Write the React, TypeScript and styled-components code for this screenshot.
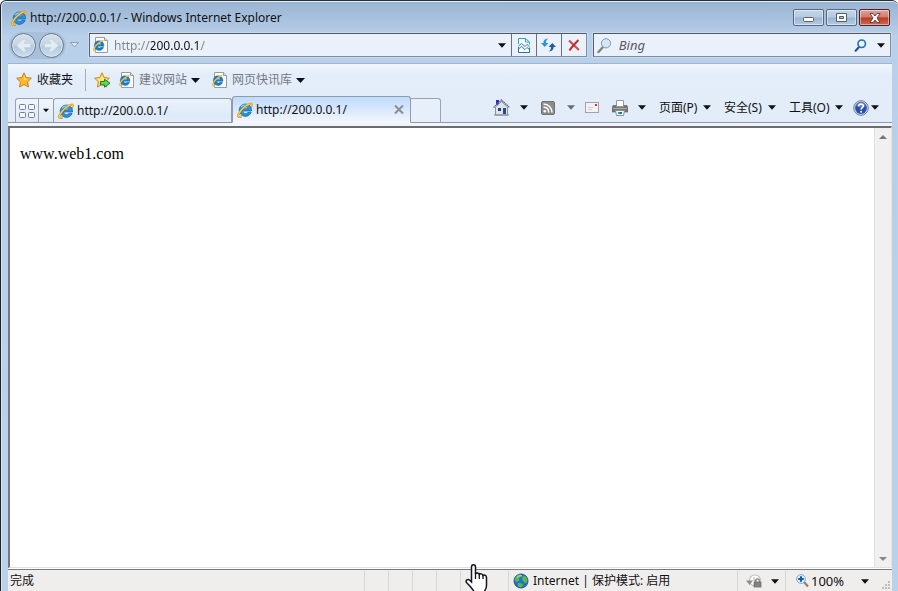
import React from "react";
import styled, { createGlobalStyle, css } from "styled-components";

const GlobalStyle = createGlobalStyle`
  * { box-sizing: border-box; }
  html, body { margin: 0; padding: 0; overflow: hidden; }
  body, button, input {
    font-family: "Noto Sans", "Noto Sans CJK SC", sans-serif;
    font-size: 12px;
    line-height: 16px;
    color: #111;
  }
  button { background: none; border: 0; padding: 0; margin: 0; cursor: pointer; }
  svg { display: block; flex: none; }
`;

const Frame = styled.div`
  height: 100vh;
  display: flex;
  flex-direction: column;
  background: linear-gradient(#98b3d1 0, #a8c1de 18px, #b9d0ea 36px, #b9d1ea 100%);
  border-top: 1px solid #223039;
  border-left: 1px solid #1c1f24;
  border-top-left-radius: 6px;
  border-top-right-radius: 6px;
  box-shadow: inset 0 1px 0 #e3edf6, inset 1px 0 0 #dbe8f5;
  padding: 0 6px 0 7px;
`;

const TitleBar = styled.header`
  display: flex;
  align-items: center;
  height: 32px;
  gap: 3px;
  padding: 1px 2px 0 3px;
`;

const Title = styled.h1`
  flex: 1;
  margin: 0;
  font-size: 12px;
  font-weight: 400;
`;

const WindowButtons = styled.div`
  display: flex;
  gap: 2px;
`;

const WindowButton = styled.button<{ $close?: boolean }>`
  width: 31px;
  height: 17px;
  display: grid;
  place-items: center;
  border: 1px solid ${(p) => (p.$close ? "#4e2226" : "#56697f")};
  border-radius: 2px;
  box-shadow: inset 0 0 0 1px rgba(255, 255, 255, 0.45);
  background: ${(p) =>
    p.$close
      ? "linear-gradient(#e3a49a 0, #d3796a 7px, #b93b22 8px, #cf6c54 100%)"
      : "linear-gradient(#c4d5e8 0, #b5cae2 7px, #9bb4d0 8px, #b3cbe5 100%)"};
`;

const NavRow = styled.div`
  display: flex;
  height: 30px;
  align-items: flex-start;
  padding-right: 1px;
`;

const NavButtons = styled.div`
  display: flex;
  align-items: center;
  width: 81px;
  height: 24px;
  padding-left: 1px;
`;

const NavPair = styled.div`
  display: flex;
  gap: 3px;
  padding: 1px 2px;
  border-radius: 14px;
  background: #a9c0da;
`;

const RoundButton = styled.button`
  width: 25px;
  height: 25px;
  display: grid;
  place-items: center;
  border: 1px solid #66798f;
  border-radius: 50%;
  background: linear-gradient(#d5e0eb 0, #c6d4e2 48%, #b2c7da 52%, #cbdfef 100%);
  box-shadow: inset 0 0 0 1px #dce6ef;
`;

const SmallDrop = styled.button`
  width: 17px;
  height: 20px;
  display: grid;
  place-items: center;
`;

const Field = styled.div`
  display: flex;
  align-items: center;
  height: 24px;
  background: #ebf1fa;
  border: 1px solid #7f8da0;
  border-top-color: #515861;
  border-left-color: #5b6470;
  box-shadow: 0 0 0 1px #c9daee;
`;

const AddressField = styled(Field)`
  flex: 499;
  min-width: 0;
  padding-left: 3px;
`;

const SearchField = styled(Field)`
  flex: 297;
  min-width: 0;
  margin-left: 6px;
  padding-left: 3px;
`;

const textInput = css`
  flex: 1;
  min-width: 0;
  height: 20px;
  border: 0;
  padding: 0;
  outline: 0;
`;

const AddressInput = styled.input`
  ${textInput}
  margin-left: 5px;
  color: transparent;
  caret-color: #111;
  background: linear-gradient(to right, #808489 0 37px, #111 37px 87px, #808489 87px);
  background-clip: text;
  -webkit-background-clip: text;
`;

const SearchInput = styled.input`
  ${textInput}
  margin-left: 7px;
  font-size: 13px;
  background: transparent;
  &::placeholder { color: #565a60; font-style: italic; opacity: 1; }
`;

const FieldButton = styled.button<{ $divided?: boolean; $width?: number }>`
  width: ${(p) => p.$width ?? 25}px;
  height: 22px;
  display: grid;
  place-items: center;
  border-left: ${(p) => (p.$divided ? "1px solid #69707b" : "0")};
`;

const Toolbars = styled.div`
  background: linear-gradient(#f0f6fd 0, #e4eefa 10px, #e1ecf8 100%);
  border-top: 1px solid #9fb5cf;
`;

const FavoritesBar = styled.nav`
  display: flex;
  align-items: center;
  height: 32px;
  padding: 0 8px;
`;

const FavoritesButton = styled.button`
  display: flex;
  align-items: center;
  gap: 4px;
  height: 22px;
  padding-right: 12px;
  border-right: 1px solid #a4adb8;
  margin-right: 8px;
`;

const FavLink = styled.button`
  display: flex;
  align-items: center;
  gap: 4px;
  color: #75797f;
  margin-left: 8px;
  padding-right: 4px;
`;

const TabRow = styled.div`
  display: flex;
  align-items: flex-end;
  height: 27px;
  padding-left: 7px;
  background: linear-gradient(transparent 26px, #8f99aa 26px);
`;

const QuickTabs = styled.div`
  display: flex;
  height: 25px;
  width: 38px;
  border: 1px solid #9aa3af;
  border-bottom-color: #8f99aa;
  border-right: 0;
  border-top-left-radius: 3px;
  background: linear-gradient(#f1f6fc, #dfe9f6);
`;

const QuickButton = styled.button<{ $narrow?: boolean }>`
  width: ${(p) => (p.$narrow ? 15 : 22)}px;
  display: grid;
  place-items: center;
  border-left: ${(p) => (p.$narrow ? "1px solid #9aa3af" : "0")};
`;

const Tab = styled.div<{ $active?: boolean }>`
  flex: 0 1 179px;
  min-width: 60px;
  height: ${(p) => (p.$active ? 27 : 25)}px;
  display: flex;
  align-items: center;
  padding: 0 6px 0 4px;
  border: 1px solid #929ba8;
  border-bottom-color: ${(p) => (p.$active ? "#f3f6fb" : "#8f99aa")};
  border-radius: 3px 3px 0 0;
  background: ${(p) =>
    p.$active
      ? "linear-gradient(#bfdbfc 0, #d8e7fb 12px, #f3f6fb 100%)"
      : "linear-gradient(#e9f1fb 0, #deeaf8 18px, #e6eefa 100%)"};
`;

const TabLabel = styled.button`
  flex: 1;
  display: flex;
  align-items: center;
  gap: 3px;
  white-space: nowrap;
`;

const NewTab = styled.button`
  width: 30px;
  height: 25px;
  border: 1px solid #9aa3af;
  border-bottom-color: #8f99aa;
  border-left: 0;
  border-radius: 0 3px 0 0;
  background: #e7effa;
`;

const ToolbarFoot = styled.div`
  height: 3px;
  background: #f1f5fb;
`;

const Commands = styled.div`
  display: flex;
  align-items: center;
  align-self: flex-start;
  margin-left: auto;
  height: 23px;
  padding-right: 13px;
`;

const Command = styled.button<{ $gap?: number; $before?: number; $label?: number }>`
  display: flex;
  align-items: center;
  gap: ${(p) => p.$gap ?? 4}px;
  margin-left: ${(p) => p.$before ?? 13}px;
  white-space: nowrap;
  span { min-width: ${(p) => p.$label ?? 0}px; text-align: left; }
`;

const Viewport = styled.main`
  flex: 1;
  min-height: 0;
  display: flex;
  background: #fff;
  border-top: 2px solid #696c70;
  border-left: 2px solid #75777b;
  border-right: 1px solid #e3e3e3;
  border-bottom: 1px solid #e0e0e0;
`;

const Page = styled.article`
  flex: 1;
  padding: 16px 10px;
  font: 16px/19px "Liberation Serif", serif;
  color: #000;
  p { margin: 0; }
`;

const Scrollbar = styled.div`
  width: 17px;
  display: flex;
  flex-direction: column;
  justify-content: space-between;
  background: #f0f0f0;
  border-left: 1px solid #e2e2e2;
`;

const ScrollButton = styled.button`
  height: 17px;
  display: grid;
  place-items: center;
`;

const StatusBar = styled.footer`
  position: relative;
  display: flex;
  height: 23px;
  background: #f0eded;
  border-top: 1px solid #fff;
  box-shadow: inset 0 1px 0 #77797c;
  padding-top: 2px;
`;

const Cell = styled.div<{ $width?: number; $first?: boolean }>`
  ${(p) => (p.$width ? `flex: none; width: ${p.$width}px;` : "flex: 1;")}
  display: flex;
  align-items: center;
  border-left: ${(p) => (p.$first ? "0" : "1px solid #d6d4d4")};
  padding-left: ${(p) => (p.$first ? 2 : 4)}px;
  white-space: nowrap;
`;

const StatusButton = styled.button<{ $gap: number; $pad: number }>`
  display: flex;
  align-items: center;
  gap: ${(p) => p.$gap}px;
  padding-left: ${(p) => p.$pad}px;
`;

const Zone = styled.span`
  margin-left: 4px;
`;

const ZoomText = styled.span`
  font-size: 13px;
  min-width: 48px;
  text-align: left;
`;

const Grip = styled.span`
  margin-left: auto;
  align-self: flex-end;
`;

const HandCursor = styled.svg`
  position: absolute;
  left: 457px;
  bottom: -1px;
`;

const Arrow = ({ color = "#111", size = 9 }: { color?: string; size?: number }) => (
  <svg width={size} height="5" viewBox="0 0 9 5" aria-hidden="true">
    <path d="M0 0h9L4.500 5z" fill={color} />
  </svg>
);

const IeLogo = () => (
  <svg width="16" height="16" viewBox="0 0 16 16" aria-hidden="true">
    <path d="M12.600 2.200C14 .9 15.500 1 15.200 3c-.1.8-.5 1.700-1 2.500" fill="none" stroke="#eeb027" strokeWidth="1.500" />
    <path
      d="M8.300 2a6.200 6.200 0 1 0 5.900 8.300h-3.300c-1.300 2.200-5 1.500-5.200-1.300h8.800C15 5 12.300 2 8.300 2zM5.800 6.800c.6-2.600 4.800-2.600 5.200 0z"
      fill="#2494dd"
      stroke="#1262ad"
      strokeWidth=".7"
    />
    <path d="M4 5.200c1.400-2 5-3 7.400-1.200" fill="none" stroke="#7dd3fa" strokeWidth="1.200" />
    <path d="M13.500 1.700C9.500 2.400 3.600 7.500 1.500 12.500c-1 2.600.6 3.200 3 1.800" fill="none" stroke="#b9780d" strokeWidth="2" />
    <path d="M13.500 1.700C9.500 2.400 3.600 7.500 1.500 12.500c-1 2.600.6 3.200 3 1.800" fill="none" stroke="#ffd04b" strokeWidth="1.200" />
  </svg>
);

const PageIcon = () => (
  <svg width="16" height="17" viewBox="0 0 16 17" aria-hidden="true">
    <path d="M2.500.5h9l3 3v12h-12z" fill="#fcfcfc" stroke="#9b9b9b" />
    <path d="M11.500.5v3h3" fill="#e0e0e0" stroke="#9b9b9b" />
    <path
      d="M6 3.800a4.800 4.800 0 1 0 4.600 6.500H7.900c-1 1.400-3 .9-3.200-1h6.200C11.200 6 9.200 3.800 6 3.800zM4.700 7.400c.4-1.900 3.100-1.900 3.500 0z"
      fill="#167dcc"
      stroke="#0f5ca8"
      strokeWidth=".4"
    />
    <path d="M10.500 3.500C7.500 4 2.400 8 1 11.500c-.8 2.200.4 2.700 2.200 1.800" fill="none" stroke="#f6b82e" strokeWidth="1.300" />
  </svg>
);

const starPath = "M8 .8l2.200 4.700 5.200.7-3.800 3.600.9 5.200L8 12.500 3.500 15l.9-5.200L.6 6.200l5.200-.7z";

const Star = ({ add }: { add?: boolean }) => (
  <svg width="17" height="17" viewBox="0 0 17 17" aria-hidden="true">
    <path d={starPath} fill={add ? "#ffe06b" : "#fdb82c"} stroke="#cf8018" strokeLinejoin="round" />
    <path d="M8 3l1.300 3.500 3.200.4-4.500 1z" fill="#fff0a8" opacity=".7" />
    {add && <path d="M6.500 9.500h4V7.200l5.500 4-5.500 4v-2.400h-4z" fill="#69d45c" stroke="#158520" />}
  </svg>
);

const NavArrow = ({ flip }: { flip?: boolean }) => (
  <svg width="17" height="15" viewBox="0 0 17 15" aria-hidden="true">
    <path
      d={flip ? "M1.500 5.500H8l-2.500-4h3.500l6.500 6-6.500 6H5.500l2.500-4H1.500z" : "M15.500 5.500H9l2.500-4H8l-6.500 6 6.500 6h3.500L9 9.500h6.500z"}
      fill="#e3ebf3"
      stroke="#c3d1de"
      strokeWidth=".6"
    />
  </svg>
);

const BrokenPage = () => (
  <svg width="12" height="15" viewBox="0 0 12 15" aria-hidden="true">
    <path d="M.5 6V.5h7l4 3.500v2.500" fill="#f8fcff" stroke="#2fa3c9" />
    <path d="M.5 9v5.500h11V9.500" fill="#f8fcff" stroke="#2873b5" />
    <path d="M7.500.5V4h4" fill="none" stroke="#2fa3c9" />
    <path d="M.5 8l3-2.500L7 8.500l2-2 2.500 2M.5 11l3-2.500L7 11.500l2-2 2.500 2" fill="none" stroke="#3a84bd" />
  </svg>
);

const Refresh = () => (
  <svg width="15" height="14" viewBox="0 0 15 14" aria-hidden="true">
    <path d="M7 .5C3.500.8 2.500 2.500 2.500 5H0l3.700 4L7.500 5H5C5 3 5.500 1.800 7 .5z" fill="#2f92d5" />
    <path d="M8 13.500c3.500-.3 4.500-2 4.500-4.500H15l-3.700-4L7.500 9H10c0 2-.5 3.200-2 4.500z" fill="#2358a7" />
  </svg>
);

const StopX = () => (
  <svg width="12" height="12" viewBox="0 0 12 12" aria-hidden="true">
    <path d="M1 1.500C4 4.500 7 7.500 11 11" fill="none" stroke="#d04c50" strokeWidth="2.200" />
    <path d="M10.500 1C7 4.500 4 7.500 1.500 11.500" fill="none" stroke="#c02a2c" strokeWidth="2" />
  </svg>
);

const Magnifier = ({ blue }: { blue?: boolean }) => (
  <svg width={blue ? 13 : 15} height={blue ? 13 : 17} viewBox="0 0 15 16" aria-hidden="true">
    <path d="M6 9.500L1.500 14.500" stroke={blue ? "#24509a" : "#858585"} strokeWidth="2.500" strokeLinecap="round" />
    <circle cx="9" cy="5.800" r="4.600" fill={blue ? "#eaf6ff" : "#cfe9fb"} stroke={blue ? "#2471b8" : "#8d969e"} strokeWidth={blue ? 2 : 1} />
  </svg>
);

const QuickGrid = () => (
  <svg width="16" height="14" viewBox="0 0 16 14" aria-hidden="true">
    <g fill="#f4f7fc" stroke="#737f9a">
      <rect x=".5" y=".5" width="6" height="5" rx="1" />
      <rect x="9.500" y=".5" width="6" height="5" rx="1" />
      <rect x=".5" y="8.500" width="6" height="5" rx="1" />
      <rect x="9.500" y="8.500" width="6" height="5" rx="1" />
    </g>
  </svg>
);

const HomeIcon = () => (
  <svg width="17" height="17" viewBox="0 0 17 17" aria-hidden="true">
    <path d="M3 1h3v5H3z" fill="#2837b8" />
    <path d="M2.500 8L8.500 2.500l6 5.500v8h-12z" fill="#dfe3e8" stroke="#8c929c" />
    <path d="M.5 8.500l8-7.500 8 7.500" fill="none" stroke="#59648f" strokeWidth="1.300" strokeDasharray="1.500 .5" />
    <path d="M5 9h3v3H5z" fill="#26456c" />
    <path d="M10 9h3v6h-3z" fill="#204c98" />
    <path d="M1 16h15" stroke="#858b91" />
  </svg>
);

const FeedIcon = () => (
  <svg width="14" height="14" viewBox="0 0 14 14" aria-hidden="true">
    <rect x=".5" y=".5" width="13" height="13" rx="1.500" fill="#8c8c8c" stroke="#707070" />
    <circle cx="3.800" cy="10.200" r="1.300" fill="#fff" />
    <path d="M2.500 6.300c3 0 5.200 2 5.200 5.200M2.500 3c4.700 0 8.500 3.600 8.500 8.500" fill="none" stroke="#fff" strokeWidth="1.500" />
  </svg>
);

const MailIcon = () => (
  <svg width="14" height="11" viewBox="0 0 14 11" aria-hidden="true">
    <rect x=".5" y=".5" width="13" height="10" fill="#f3f1f2" stroke="#a4a2a6" />
    <path d="M10 2h2v2h-2z" fill="#e32b31" />
    <path d="M3 5.500h5M3 7.500h4" stroke="#d1d1d4" />
  </svg>
);

const PrinterIcon = () => (
  <svg width="16" height="16" viewBox="0 0 16 16" aria-hidden="true">
    <path d="M4.500.5h7v6h-7z" fill="#fff" stroke="#989898" />
    <path d="M1 5.500h3v2h8v-2h3L16 8v4H0V8z" fill="#777" stroke="#5d5d5d" strokeWidth=".6" />
    <path d="M1 8.500h14" stroke="#aaa" />
    <path d="M3.500 10.500h9l-1 5h-7z" fill="#f6f8f8" stroke="#8e8e8e" />
    <path d="M6 12h2v2H6z" fill="#17a6a6" />
    <path d="M8 12h2v2H8z" fill="#2364b4" />
  </svg>
);

const HelpIcon = () => (
  <svg width="16" height="16" viewBox="0 0 16 16" aria-hidden="true">
    <circle cx="8" cy="8" r="7.300" fill="#d2d7e2" stroke="#707c99" />
    <circle cx="8" cy="8" r="5.900" fill="#2850ad" />
    <path d="M3 6a5.300 5.300 0 0 1 10 0c-3 1.800-6 2-10 0z" fill="#7398df" opacity=".6" />
    <path d="M5.700 6.200C5.800 3.300 10.300 3.400 10.300 6c0 1.700-2.200 1.600-2.200 3.500" fill="none" stroke="#fff" strokeWidth="1.700" />
    <circle cx="8.100" cy="11.700" r="1" fill="#fff" />
  </svg>
);

const Globe = () => (
  <svg width="16" height="16" viewBox="0 0 16 16" aria-hidden="true">
    <circle cx="8" cy="8" r="7" fill="#2671c7" stroke="#275485" />
    <path d="M3 3.500C5 1 8 1 8.500 2.500L7 4.500 5.500 5l1 2L4 9 1.500 7zM10 3l3 .8 1.500 3.700-1.500 3-2.500-2L9 6zM5 10l4 .5 1 2-2.500 2L5 13z" fill="#59bb49" />
    <path d="M4 4.500c2-2 4-2 5-1.500" fill="none" stroke="#b6e6fb" />
  </svg>
);

const PrivacyIcon = () => (
  <svg width="17" height="16" viewBox="0 0 17 16" aria-hidden="true">
    <circle cx="9" cy="7.500" r="5.500" fill="#fff" stroke="#bdbdbd" strokeWidth="1.200" />
    <path d="M0 7.500h7L3.500 12z" fill="#8e8e8e" />
    <path d="M8 4v4h3" fill="none" stroke="#aaa" />
    <path d="M9.700 9V7.500c0-2.200 3.600-2.200 3.600 0V9" fill="none" stroke="#777" strokeWidth="1.200" />
    <rect x="8" y="9" width="7" height="5" fill="#848484" stroke="#666" strokeWidth=".7" />
  </svg>
);

const ZoomIcon = () => (
  <svg width="13" height="14" viewBox="0 0 13 14" aria-hidden="true">
    <path d="M8 8l4 4.500" stroke="#a07c63" strokeWidth="2.200" />
    <circle cx="5" cy="5" r="4.400" fill="#e3f2ff" stroke="#78a9d7" />
    <path d="M5 2.200v5.600M2.200 5h5.600" stroke="#1559ae" strokeWidth="2" />
  </svg>
);

export default function App() {
  return (
    <>
      <GlobalStyle />
      <Frame>
        <TitleBar>
          <IeLogo />
          <Title>http://200.0.0.1/ - Windows Internet Explorer</Title>
          <WindowButtons>
            <WindowButton aria-label="Minimize">
              <svg width="12" height="8" viewBox="0 0 12 8">
                <rect x=".5" y="3.500" width="10" height="4" rx="1" fill="#fff" stroke="#59616d" />
              </svg>
            </WindowButton>
            <WindowButton aria-label="Maximize">
              <svg width="11" height="9" viewBox="0 0 11 9">
                <path d="M.5.5h10v8H.5zM3.500 3.500h4v2h-4z" fill="#fff" fillRule="evenodd" stroke="#525d6c" />
              </svg>
            </WindowButton>
            <WindowButton $close aria-label="Close">
              <svg width="12" height="10" viewBox="0 0 12 10">
                <path d="M1 .5h3L6 3l2-2.500h3L8 5l3 4.500H8L6 7 4 9.500H1L4 5z" fill="#fff" stroke="#5b3a42" strokeWidth=".9" />
              </svg>
            </WindowButton>
          </WindowButtons>
        </TitleBar>

        <NavRow>
          <NavButtons>
            <NavPair>
              <RoundButton aria-label="Back"><NavArrow /></RoundButton>
              <RoundButton aria-label="Forward"><NavArrow flip /></RoundButton>
            </NavPair>
            <SmallDrop aria-label="Recent pages">
              <svg width="9" height="6" viewBox="0 0 9 6"><path d="M.5.5h8l-4 4.500z" fill="#dce8f4" stroke="#7c90a8" strokeWidth=".8" /></svg>
            </SmallDrop>
          </NavButtons>
          <AddressField>
            <PageIcon />
            <AddressInput aria-label="Address" defaultValue="http://200.0.0.1/" />
            <FieldButton $width={18} aria-label="Address history"><Arrow size={8} /></FieldButton>
            <FieldButton $divided aria-label="Compatibility view"><BrokenPage /></FieldButton>
            <FieldButton $divided aria-label="Refresh"><Refresh /></FieldButton>
            <FieldButton $divided aria-label="Stop"><StopX /></FieldButton>
          </AddressField>
          <SearchField>
            <Magnifier />
            <SearchInput aria-label="Search" placeholder="Bing" />
            <FieldButton $width={24} aria-label="Go"><Magnifier blue /></FieldButton>
            <FieldButton $width={18} aria-label="Search options"><Arrow size={8} /></FieldButton>
          </SearchField>
        </NavRow>

        <Toolbars>
          <FavoritesBar>
            <FavoritesButton><Star />收藏夹</FavoritesButton>
            <button aria-label="Add to favorites"><Star add /></button>
            <FavLink><PageIcon />建议网站<Arrow /></FavLink>
            <FavLink><PageIcon />网页快讯库<Arrow /></FavLink>
          </FavoritesBar>
          <TabRow>
            <QuickTabs>
              <QuickButton aria-label="Quick tabs"><QuickGrid /></QuickButton>
              <QuickButton $narrow aria-label="Tab list"><Arrow size={6} /></QuickButton>
            </QuickTabs>
            <Tab><TabLabel><IeLogo />http://200.0.0.1/</TabLabel></Tab>
            <Tab $active>
              <TabLabel><IeLogo />http://200.0.0.1/</TabLabel>
              <button aria-label="Close tab">
                <svg width="10" height="9" viewBox="0 0 10 9"><path d="M1 .5l8 8M9 .5l-8 8" stroke="#898e96" strokeWidth="2" /></svg>
              </button>
            </Tab>
            <NewTab aria-label="New tab" />
            <Commands>
              <Command $gap={10} aria-label="Home"><HomeIcon /><Arrow size={8} /></Command>
              <Command $gap={12} aria-label="Feeds"><FeedIcon /><Arrow size={8} color="#686c72" /></Command>
              <Command $before={10} aria-label="Read mail"><MailIcon /></Command>
              <Command $gap={10} aria-label="Print"><PrinterIcon /><Arrow size={8} /></Command>
              <Command $label={40}><span>页面(P)</span><Arrow size={8} /></Command>
              <Command $label={40}><span>安全(S)</span><Arrow size={8} /></Command>
              <Command $label={42}><span>工具(O)</span><Arrow size={8} /></Command>
              <Command $before={10} $gap={2} aria-label="Help"><HelpIcon /><Arrow size={8} /></Command>
            </Commands>
          </TabRow>
          <ToolbarFoot />
        </Toolbars>

        <Viewport>
          <Page><p>www.web1.com</p></Page>
          <Scrollbar>
            <ScrollButton aria-label="Scroll up">
              <svg width="8" height="4" viewBox="0 0 8 4"><path d="M0 4h8L4 0z" fill="#777" /></svg>
            </ScrollButton>
            <ScrollButton aria-label="Scroll down">
              <svg width="8" height="4" viewBox="0 0 8 4"><path d="M0 0h8L4 4z" fill="#888" /></svg>
            </ScrollButton>
          </Scrollbar>
        </Viewport>

        <StatusBar>
          <Cell $first>完成</Cell>
          <Cell $width={24} />
          <Cell $width={24} />
          <Cell $width={24} />
          <Cell $width={24} />
          <Cell $width={48} />
          <Cell $width={229}><Globe /><Zone>Internet | 保护模式: 启用</Zone></Cell>
          <Cell $width={48}>
            <StatusButton $gap={8} $pad={4} aria-label="Privacy"><PrivacyIcon /><Arrow size={8} /></StatusButton>
          </Cell>
          <Cell $width={107}>
            <StatusButton $gap={2} $pad={6}><ZoomIcon /><ZoomText>100%</ZoomText><Arrow size={8} /></StatusButton>
            <Grip>
              <svg width="10" height="10" viewBox="0 0 10 10" aria-hidden="true">
                <path d="M6 0h2v2H6zM3 3h2v2H3zM6 3h2v2H6zM0 6h2v2H0zM3 6h2v2H3zM6 6h2v2H6z" fill="#bdbdbd" />
              </svg>
            </Grip>
          </Cell>
          <HandCursor width="23" height="28" viewBox="0 0 23 28" aria-hidden="true">
            <path
              d="M6.500 18V3c0-3 4-3 4 0v7c.5-1.500 3.300-1.300 3.800.5.8-1.200 3.200-.8 3.700 1 1-1 3.500-.3 3.500 2v8c0 3-1.500 4.500-2.500 7H9.500C8 25 4 21 1.500 18.500c-1.500-2 1.300-4 3.200-2.200z"
              fill="#fff"
              stroke="#15171f"
              strokeWidth="1.500"
            />
            <path d="M10.500 9v6M14.300 10.500V15M18 11.500V15" stroke="#15171f" strokeWidth="1.300" />
          </HandCursor>
        </StatusBar>
      </Frame>
    </>
  );
}
